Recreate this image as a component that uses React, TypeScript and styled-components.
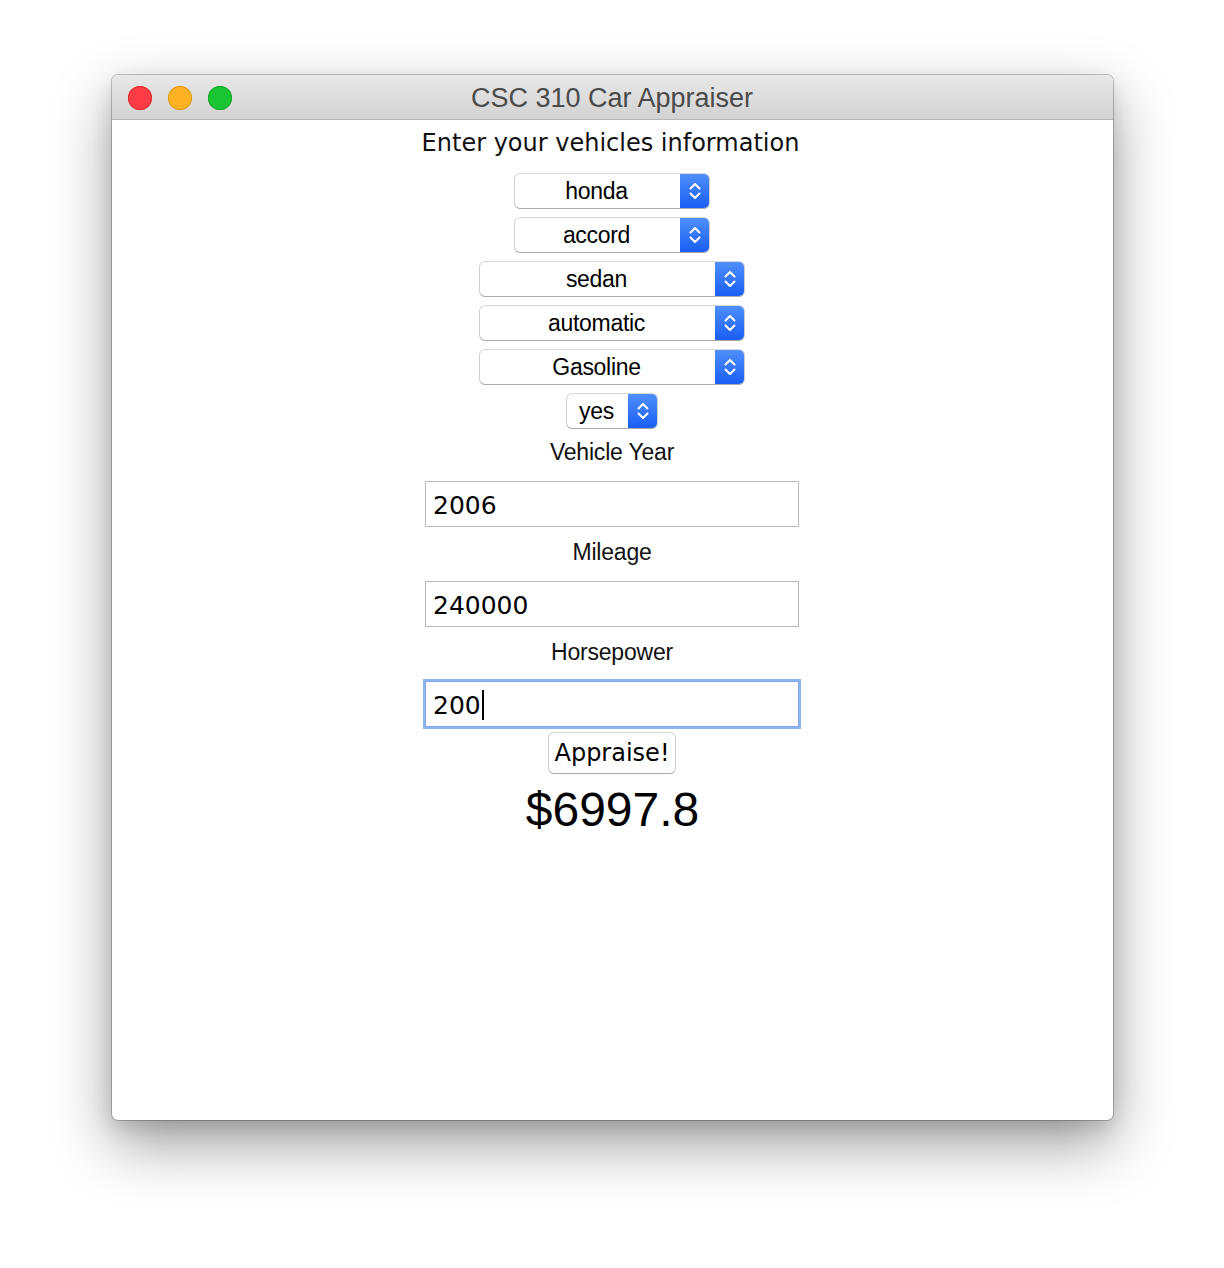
import React from "react";
import styled, { createGlobalStyle } from "styled-components";

const Global = createGlobalStyle`
  html, body { margin: 0; padding: 0; background: #ffffff; }
  body { width: 1224px; height: 1268px; overflow: hidden; }
`;

const Page = styled.div`
  width: 1224px;
  height: 1268px;
  padding-top: 75px;
  box-sizing: border-box;
  display: flex;
  justify-content: center;
`;

const Window = styled.div`
  width: 1001px;
  height: 1045px;
  border-radius: 6px;
  background: #ffffff;
  box-shadow: 0 0 0 1px rgba(0, 0, 0, 0.22), 0 24px 60px rgba(0, 0, 0, 0.38),
    0 8px 20px rgba(0, 0, 0, 0.12);
  display: flex;
  flex-direction: column;
  overflow: hidden;
`;

const TitleBar = styled.div`
  height: 44px;
  flex: 0 0 44px;
  background: linear-gradient(#e8e8e8, #d2d2d2);
  border-bottom: 1px solid #b5b5b5;
  display: flex;
  align-items: center;
  position: relative;
`;

const Lights = styled.div`
  display: flex;
  gap: 16px;
  padding-left: 16px;
  position: absolute;
  left: 0;
  top: 11px;
`;

const Light = styled.span<{ $c: string; $b: string }>`
  width: 24px;
  height: 24px;
  border-radius: 50%;
  background: ${(p) => p.$c};
  box-shadow: inset 0 0 0 1px ${(p) => p.$b};
`;

const Title = styled.div`
  flex: 1;
  text-align: center;
  font-family: "Liberation Sans", Arial, sans-serif;
  font-size: 27px;
  color: #4b4b4b;
  padding-top: 2px;
`;

const Content = styled.div`
  flex: 1;
  display: flex;
  flex-direction: column;
  align-items: center;
  padding-top: 8px;
`;

const Heading = styled.div`
  font-family: "DejaVu Sans", sans-serif;
  font-size: 24px;
  line-height: 30px;
  color: #111;
  margin-bottom: 16px;
  margin-right: 3px;
`;

const SelectList = styled.div`
  display: flex;
  flex-direction: column;
  align-items: center;
  gap: 10px;
`;

const SelectBox = styled.div<{ $w: number }>`
  width: ${(p) => p.$w}px;
  height: 34px;
  box-sizing: border-box;
  display: flex;
  border-radius: 5px;
  background: #fff;
  box-shadow: 0 0 0 1px rgba(0, 0, 0, 0.16), 0 1px 1px rgba(0, 0, 0, 0.22);
  overflow: hidden;
`;

const SelectText = styled.div`
  flex: 1;
  text-align: center;
  font-family: "Liberation Sans", Arial, sans-serif;
  font-size: 23px;
  line-height: 34px;
  color: #000;
  padding-right: 2px;
  letter-spacing: -0.3px;
`;

const Stepper = styled.div`
  width: 29px;
  background: linear-gradient(#4f8ffb, #1a5ef2);
  display: flex;
  align-items: center;
  justify-content: center;
`;

const Label = styled.div`
  font-family: "Liberation Sans", Arial, sans-serif;
  font-size: 23px;
  line-height: 26px;
  color: #111;
  letter-spacing: -0.2px;
`;

const FieldLabel = styled(Label)<{ $mt: number }>`
  margin-top: ${(p) => p.$mt}px;
  margin-bottom: 16px;
`;

const Input = styled.div<{ $focus?: boolean }>`
  width: 374px;
  height: 46px;
  box-sizing: border-box;
  border: 1px solid #b9b9b9;
  padding-left: 7px;
  padding-top: 3px;
  display: flex;
  align-items: center;
  font-family: "DejaVu Sans", sans-serif;
  font-size: 25px;
  color: #000;
  ${(p) =>
    p.$focus &&
    `box-shadow: 0 0 0 2px #8db4f3; border-color: #7ea8ee;`}
`;

const Caret = styled.span`
  display: inline-block;
  width: 2px;
  height: 30px;
  background: #000;
  margin-left: 1px;
  margin-top: -2px;
`;

const Button = styled.div`
  margin-top: 6px;
  width: 126px;
  height: 40px;
  box-sizing: border-box;
  border-radius: 5px;
  background: #fff;
  box-shadow: 0 0 0 1px rgba(0, 0, 0, 0.17), 0 1px 1px rgba(0, 0, 0, 0.2);
  display: flex;
  align-items: center;
  justify-content: center;
  font-family: "DejaVu Sans", sans-serif;
  font-size: 24px;
  color: #000;
`;

const Result = styled.div`
  margin-top: 8px;
  font-family: "Liberation Sans", Arial, sans-serif;
  font-size: 48px;
  line-height: 58px;
  color: #000;
  margin-left: 1px;
`;

const Chevrons = () => (
  <svg width="14" height="24" viewBox="0 0 14 24">
    <path d="M2.5 9.5 L7 5 L11.5 9.5" fill="none" stroke="#fff" strokeWidth="2" strokeLinecap="round" strokeLinejoin="round" />
    <path d="M2.5 14.5 L7 19 L11.5 14.5" fill="none" stroke="#fff" strokeWidth="2" strokeLinecap="round" strokeLinejoin="round" />
  </svg>
);

const Select = ({ w, text }: { w: number; text: string }) => (
  <SelectBox $w={w}>
    <SelectText>{text}</SelectText>
    <Stepper>
      <Chevrons />
    </Stepper>
  </SelectBox>
);

export default function App() {
  return (
    <>
      <Global />
      <Page>
        <Window>
          <TitleBar>
            <Lights>
              <Light $c="#fc3c44" $b="#de2b33" />
              <Light $c="#fdb223" $b="#dd9816" />
              <Light $c="#1ac635" $b="#13a826" />
            </Lights>
            <Title>CSC 310 Car Appraiser</Title>
          </TitleBar>
          <Content>
            <Heading>Enter your vehicles information</Heading>
            <SelectList>
              <Select w={194} text="honda" />
              <Select w={194} text="accord" />
              <Select w={264} text="sedan" />
              <Select w={264} text="automatic" />
              <Select w={264} text="Gasoline" />
              <Select w={90} text="yes" />
            </SelectList>
            <FieldLabel $mt={11}>Vehicle Year</FieldLabel>
            <Input>2006</Input>
            <FieldLabel $mt={12}>Mileage</FieldLabel>
            <Input>240000</Input>
            <FieldLabel $mt={12}>Horsepower</FieldLabel>
            <Input $focus>
              200
              <Caret />
            </Input>
            <Button>Appraise!</Button>
            <Result>$6997.8</Result>
          </Content>
        </Window>
      </Page>
    </>
  );
}
